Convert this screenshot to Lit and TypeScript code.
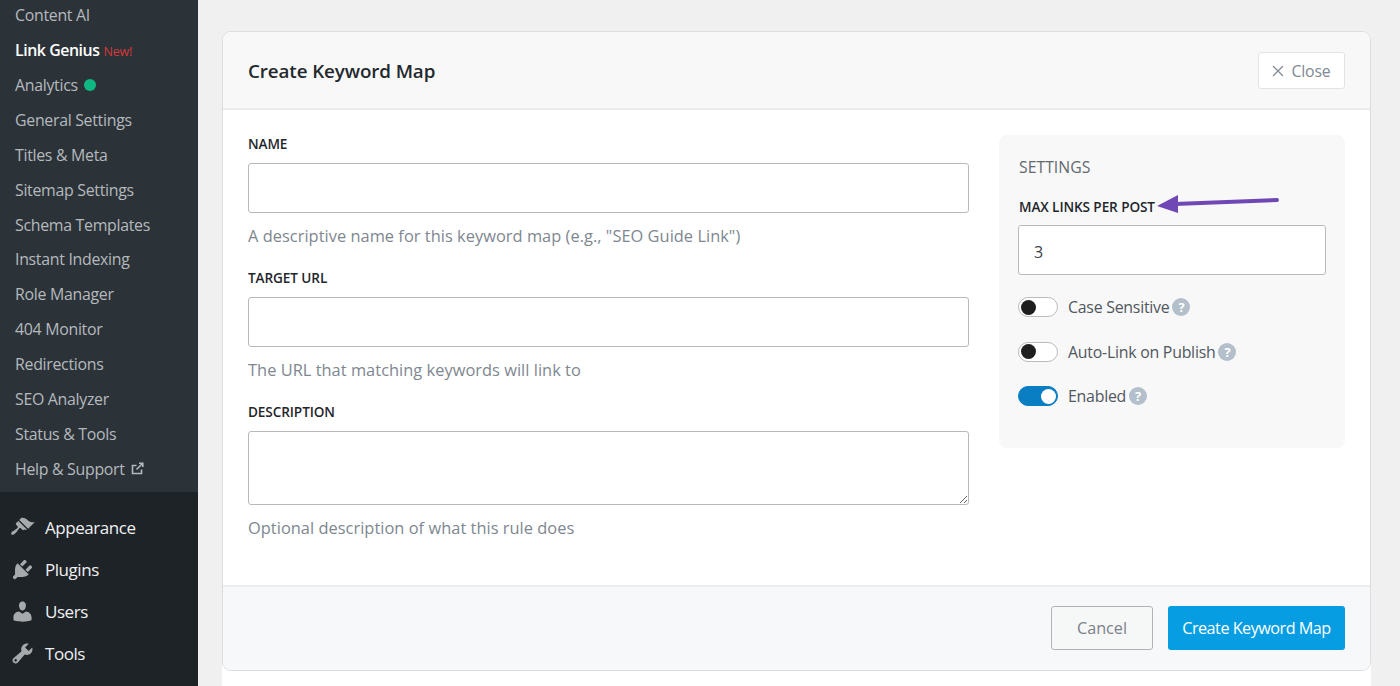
import { LitElement, html, css, svg } from "lit";
import { customElement } from "lit/decorators.js";

const SUB = ["Content AI", "Link Genius", "Analytics", "General Settings", "Titles & Meta", "Sitemap Settings", "Schema Templates", "Instant Indexing", "Role Manager", "404 Monitor", "Redirections", "SEO Analyzer", "Status & Tools", "Help & Support"];
const MENU = [
  ["Appearance", "M14.48 11.06L7.41 3.99l1.5-1.5c.5-.56 2.3-.47 3.51.32 1.21.8 1.43 1.28 2.91 2.1 1.18.64 2.45 1.26 4.45.85zm-.71.71L6.7 4.7 4.93 6.47c-.39.39-.39 1.02 0 1.41l1.06 1.06c.39.39.39 1.03 0 1.42-.6.6-1.43 1.11-2.21 1.69-.35.26-.7.53-1.01.84C1.43 13.23.4 14.85 1.16 15.6c.75.76 2.37-.27 3.71-1.61.31-.31.58-.66.84-1.01.58-.78 1.09-1.61 1.69-2.21.39-.39 1.02-.39 1.41 0l1.06 1.06c.39.39 1.02.39 1.41 0z"],
  ["Plugins", "M13.11 4.36L9.87 7.6 8 5.73l3.24-3.24c.35-.34 1.05-.2 1.56.32.52.51.66 1.21.31 1.55zm-8 1.77l.91-1.12 9.01 9.01-1.19.84c-.71.71-2.63 1.16-3.82 1.16H6.14L4.9 17.26c-.59.59-1.54.59-2.12 0-.59-.58-.59-1.53 0-2.12l1.24-1.24v-3.88c0-1.13.4-3.19 1.09-3.89zm7.26 3.97l3.24-3.24c.34-.35 1.04-.21 1.55.31.52.51.66 1.21.31 1.55l-3.24 3.25z"],
  ["Users", "M10 9.25c-2.27 0-2.73-3.44-2.73-3.44C7 4.02 7.82 2 9.97 2c2.16 0 2.98 2.02 2.71 3.81 0 0-.41 3.44-2.68 3.44zm0 2.57L12.72 10c2.39 0 4.52 2.33 4.52 4.53v2.49s-3.65 1.13-7.24 1.13c-3.65 0-7.24-1.13-7.24-1.13v-2.49c0-2.25 1.94-4.48 4.47-4.48z"],
  ["Tools", "M16.68 9.77c-1.34 1.34-3.3 1.67-4.95.99l-5.41 6.52c-.99.99-2.59.99-3.58 0s-.99-2.59 0-3.57l6.52-5.42c-.68-1.65-.35-3.61.99-4.95 1.28-1.28 3.12-1.62 4.72-1.06l-2.89 2.89 2.82 2.82 2.86-2.87c.53 1.58.18 3.39-1.08 4.65zM3.81 16.21c.4.39 1.04.39 1.43 0 .4-.4.4-1.04 0-1.43-.39-.4-1.03-.4-1.43 0-.39.39-.39 1.03 0 1.43z"],
];
const FIELDS = [
  ["Name", 'A descriptive name for this keyword map (e.g., "SEO Guide Link")', false],
  ["Target URL", "The URL that matching keywords will link to", false],
  ["Description", "Optional description of what this rule does", true],
] as const;
const TOGGLES: [string, boolean][] = [["Case Sensitive", false], ["Auto-Link on Publish", false], ["Enabled", true]];

@customElement("app-root")
export class AppRoot extends LitElement {
  static styles = css`
    :host { display: flex; height: 686px; overflow: hidden; background: #f0f0f1; font-family: "Open Sans", "Noto Sans", sans-serif; color: #1d2327; }
    * { box-sizing: border-box; }
    .side { width: 198px; flex: none; background: #1d2327; display: flex; flex-direction: column; overflow: hidden; }
    .sub { background: #2c3338; padding-bottom: 6px; margin-top: -2.2px; }
    .sub-row { height: 34.88px; display: flex; align-items: center; padding-left: 15px; font-size: 15.9px; color: #b4b9be; white-space: nowrap; letter-spacing: -0.3px; }
    .sub-row.on { color: #fff; font-weight: 600; letter-spacing: -0.45px; }
    .new { color: #d63638; font-size: 12.5px; font-weight: 400; margin-left: 4px; margin-top: 2px; letter-spacing: -0.2px; }
    .dot { width: 12px; height: 12px; border-radius: 50%; background: #10b981; margin-left: 6px; }
    .ext { margin-left: 6px; width: 13px; height: 13px; }
    .menu { padding-top: 14.5px; }
    .menu-row { height: 42.1px; display: flex; align-items: center; padding-left: 10px; gap: 10px; font-size: 17px; color: #f0f0f1; letter-spacing: -0.45px; }
    .menu-row svg { width: 25px; height: 25px; fill: #a7aaad; flex: none; }
    .main { flex: 1; padding: 31px 29px 0 24px; display: flex; min-width: 0; }
    .wrap { flex: 1; background: linear-gradient(to bottom, transparent 50%, #fff 50%); height: 100%; }
    .card { height: 640px; background: #fff; border: 1.5px solid #dcdde0; border-radius: 9px; overflow: hidden; display: flex; flex-direction: column; }
    .head { height: 78px; flex: none; background: #f8f8f9; border-bottom: 2px solid #ececee; display: flex; align-items: center; justify-content: space-between; padding: 0 25px; }
    h2 { margin: 1px 0 0; font-size: 18.8px; font-weight: 600; color: #23282d; letter-spacing: -0.1px; }
    .close { width: 87px; height: 37px; margin-top: 1px; background: #fff; border: 1.5px solid #e2e3e5; border-radius: 3px; display: flex; align-items: center; justify-content: center; gap: 6px; padding-right: 1px; font-size: 15.8px; letter-spacing: -0.15px; color: #7e8993; }
    .close svg { width: 14px; height: 14px; }
    .body { flex: 1; display: flex; padding: 25px 25px 0; gap: 30px; align-items: flex-start; }
    .form { width: 721px; flex: none; display: flex; flex-direction: column; }
    .label { display: block; font-size: 13.6px; font-weight: 600; text-transform: uppercase; color: #1f262b; line-height: 18px; margin: 0 0 10px; letter-spacing: -0.1px; }
    input, textarea { display: block; width: 100%; border: 1px solid #b6babd; border-radius: 3px; background: #fff; font: inherit; font-size: 16px; color: #3c434a; padding: 0 15px; margin: 0; outline: none; }
    input { height: 50px; }
    textarea { height: 74px; resize: vertical; }
    .help { font-size: 16.4px; color: #7e8790; line-height: 22px; margin: 12px 0 22px; letter-spacing: 0.03px; }
    .panel { width: 346px; flex: none; background: #f8f8f8; border-radius: 8px; height: 313px; padding: 20px; position: relative; }
    h3 { margin: 0 0 19px; font-size: 15.8px; font-weight: 400; color: #63696f; line-height: 24px; text-transform: uppercase; }
    .panel .label { margin-bottom: 9px; }
    .panel input { width: 308px; margin-left: -1px; padding-top: 3px; }
    .arrow { position: absolute; left: 156px; top: 56px; width: 126px; height: 24px; }
    .toggles { margin-top: 22px; }
    .tog { display: flex; align-items: center; gap: 10px; height: 20px; margin-left: -1px; font-size: 15.9px; color: #50575e; margin-bottom: 24.5px; letter-spacing: -0.25px; }
    .sw { width: 40px; height: 20px; border: 1px solid #b9bcbf; border-radius: 10px; background: #fff; position: relative; flex: none; }
    .sw::after { content: ""; position: absolute; left: 2px; top: 1.5px; width: 15px; height: 15px; border-radius: 50%; background: #1e1e1e; }
    .sw.on { background: #0a7ec2; border-color: #0a7ec2; }
    .sw.on::after { left: 22px; background: #fff; }
    .q { width: 18px; height: 18px; border-radius: 50%; background: #b3bfca; color: #fff; font-size: 13px; font-weight: 700; display: flex; align-items: center; justify-content: center; margin-left: -7px; flex: none; }
    .foot { height: 85px; flex: none; background: #f7f8f9; border-top: 2px solid #ececee; display: flex; justify-content: flex-end; align-items: center; gap: 15px; padding: 0 25px 2px; margin-top: auto; }
    .btn { height: 44px; border-radius: 3px; display: flex; align-items: center; justify-content: center; padding-top: 1px; font-size: 16.2px; }
    .cancel { width: 102px; background: #f6f7f7; border: 1px solid #b0b4b8; color: #7b8188; }
    .go { width: 177px; background: #069de3; color: #fff; letter-spacing: -0.5px; }
  `;

  render() {
    return html`
      <nav class="side">
        <div class="sub">
          ${SUB.map((s, i) => html`<div class="sub-row ${i === 1 ? "on" : ""}">
            ${s}
            ${i === 1 ? html`<span class="new">New!</span>` : ""}
            ${i === 2 ? html`<span class="dot"></span>` : ""}
            ${i === 13 ? html`<svg class="ext" viewBox="0 0 13 13" fill="none" stroke="#b4b9be" stroke-width="1.6"><path d="M10.5 7.5v4h-9v-8h4"/><path d="M5.5 7.5l6-6M8 1.2h3.8V5"/></svg>` : ""}
          </div>`)}
        </div>
        <div class="menu">
          ${MENU.map(([n, d]) => html`<div class="menu-row"><svg viewBox="0 0 20 20">${svg`<path d=${d}></path>`}</svg><span>${n}</span></div>`)}
        </div>
      </nav>
      <main class="main">
        <div class="wrap">
          <section class="card">
            <header class="head">
              <h2>Create Keyword Map</h2>
              <div class="close"><svg viewBox="0 0 14 14" fill="none" stroke="#7e8993" stroke-width="1.2"><path d="M2 2l10 10M12 2L2 12"/></svg>Close</div>
            </header>
            <div class="body">
              <div class="form">
                ${FIELDS.map(([l, h, ta]) => html`
                  <label class="label">${l}</label>
                  ${ta ? html`<textarea></textarea>` : html`<input type="text" />`}
                  <div class="help">${h}</div>`)}
              </div>
              <aside class="panel">
                <h3>Settings</h3>
                <label class="label">Max Links Per Post</label>
                <input type="text" value="3" />
                <svg class="arrow" viewBox="0 0 126 24"><path d="M20 13L122 9" stroke="#7048b6" stroke-width="4" stroke-linecap="round" fill="none"/><path d="M2 15L23 4v18z" fill="#7048b6"/></svg>
                <div class="toggles">
                  ${TOGGLES.map(([t, on]) => html`<div class="tog"><span class="sw ${on ? "on" : ""}"></span><span>${t}</span><span class="q">?</span></div>`)}
                </div>
              </aside>
            </div>
            <footer class="foot">
              <div class="btn cancel">Cancel</div>
              <div class="btn go">Create Keyword Map</div>
            </footer>
          </section>
        </div>
      </main>
    `;
  }
}
